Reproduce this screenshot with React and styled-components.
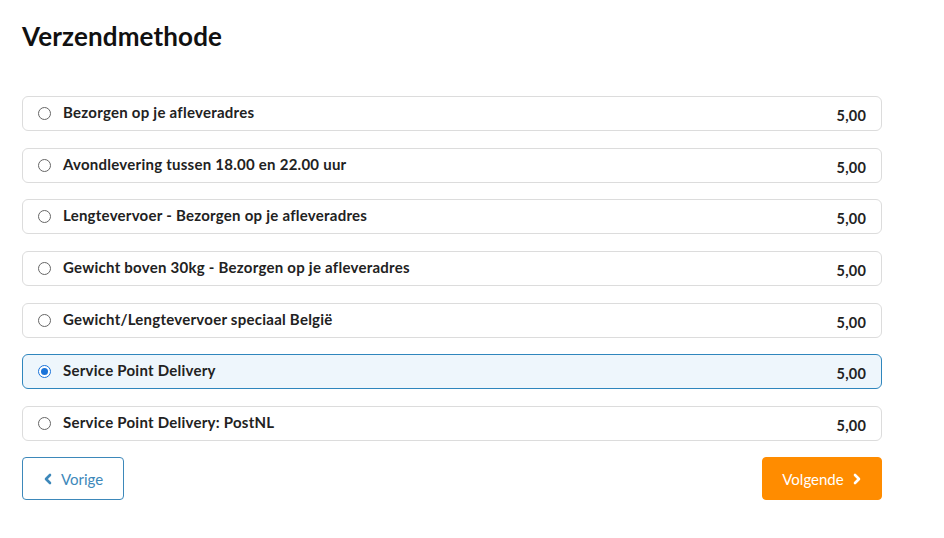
import React, { useState } from "react";
import styled, { createGlobalStyle } from "styled-components";

const Global = createGlobalStyle`
  html, body { margin: 0; padding: 0; background: #fff; }
  body { font-family: "Lato", "Noto Sans", sans-serif; color: #222; }
`;

const Page = styled.div`
  width: 860px;
  padding: 20px 22px 0 22px;
`;

const Title = styled.h1`
  margin: 0 0 44px 0;
  font-size: 26px;
  line-height: 32px;
  font-weight: 700;
  letter-spacing: 0.15px;
  color: #111;
`;

const List = styled.div`
  display: flex;
  flex-direction: column;
  gap: 16.7px;
`;

const Row = styled.label`
  display: flex;
  align-items: center;
  height: 35px;
  box-sizing: border-box;
  padding: 0 15px 0 15px;
  border: 1px solid ${(p) => (p.$active ? "#2f86bd" : "#dcdcdc")};
  background: ${(p) => (p.$active ? "#eef6fc" : "#fff")};
  border-radius: 6px;
  cursor: pointer;
`;

const Radio = styled.span`
  width: 13px;
  height: 13px;
  box-sizing: border-box;
  border-radius: 50%;
  border: 1px solid ${(p) => (p.$active ? "#1a73d9" : "#666")};
  background: #fff;
  display: flex;
  align-items: center;
  justify-content: center;
  margin-right: 12px;
  flex: none;
  &::after {
    content: "";
    display: ${(p) => (p.$active ? "block" : "none")};
    width: 7px;
    height: 7px;
    border-radius: 50%;
    background: #1a73d9;
  }
`;

const Label = styled.span`
  flex: 1;
  font-size: 15px;
  font-weight: 700;
  letter-spacing: 0.25px;
  color: #222;
  margin-top: -3px;
`;

const Price = styled.span`
  font-size: 14.5px;
  font-weight: 700;
  letter-spacing: 0.2px;
  color: #222;
  margin-top: 4px;
`;

const Actions = styled.div`
  display: flex;
  justify-content: space-between;
  margin-top: 16px;
`;

const Button = styled.button`
  height: 43px;
  box-sizing: border-box;
  border-radius: 4px;
  font-family: inherit;
  font-size: 15px;
  display: flex;
  align-items: center;
  gap: 8px;
  cursor: pointer;
  border: 1px solid ${(p) => (p.$primary ? "#ff8c00" : "#3d88ba")};
  background: ${(p) => (p.$primary ? "#ff8c00" : "#fff")};
  color: ${(p) => (p.$primary ? "#fff" : "#3d88ba")};
  padding: 0;
  width: ${(p) => (p.$primary ? "120px" : "102px")};
  justify-content: center;
`;

const Chevron = ({ dir }) => (
  <svg width="10" height="12" viewBox="0 0 10 12" fill="none">
    <path
      d={dir === "left" ? "M7 2 L3 6 L7 10" : "M3 2 L7 6 L3 10"}
      stroke="currentColor"
      strokeWidth="2.6"
      strokeLinecap="round"
      strokeLinejoin="round"
    />
  </svg>
);

const options = [
  "Bezorgen op je afleveradres",
  "Avondlevering tussen 18.00 en 22.00 uur",
  "Lengtevervoer - Bezorgen op je afleveradres",
  "Gewicht boven 30kg - Bezorgen op je afleveradres",
  "Gewicht/Lengtevervoer speciaal België",
  "Service Point Delivery",
  "Service Point Delivery: PostNL",
];

export default function App() {
  const [sel, setSel] = useState(5);
  return (
    <Page>
      <Global />
      <Title>Verzendmethode</Title>
      <List>
        {options.map((o, i) => (
          <Row key={o} $active={sel === i} onClick={() => setSel(i)}>
            <Radio $active={sel === i} />
            <Label>{o}</Label>
            <Price>5,00</Price>
          </Row>
        ))}
      </List>
      <Actions>
        <Button>
          <Chevron dir="left" />
          Vorige
        </Button>
        <Button $primary>
          Volgende
          <Chevron dir="right" />
        </Button>
      </Actions>
    </Page>
  );
}
